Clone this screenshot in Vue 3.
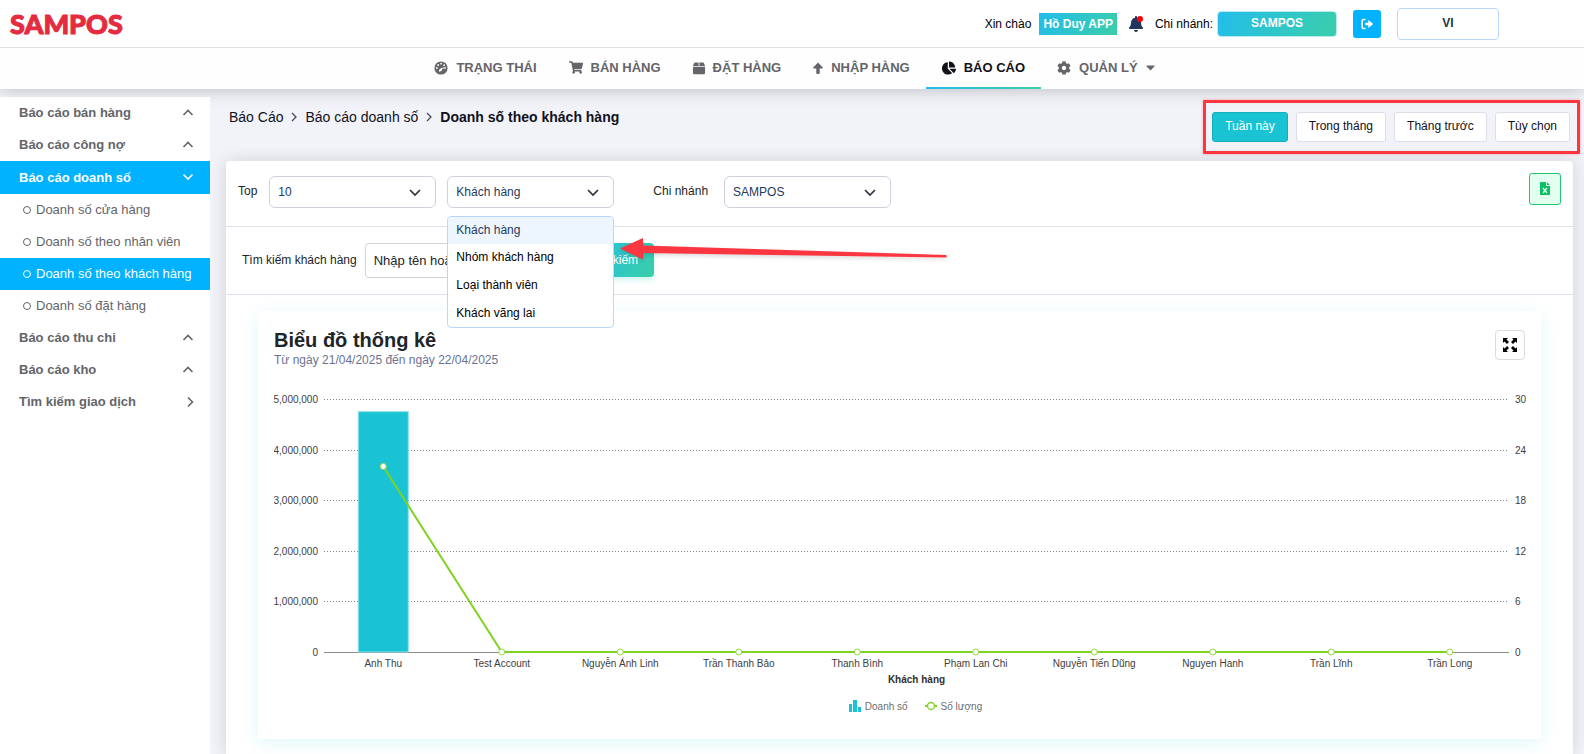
<script setup>
import { ref, computed, onMounted, onBeforeUnmount } from 'vue'

const navItems = [
  { label: 'TRẠNG THÁI', icon: 'palette' },
  { label: 'BÁN HÀNG', icon: 'cart' },
  { label: 'ĐẶT HÀNG', icon: 'box' },
  { label: 'NHẬP HÀNG', icon: 'arrow' },
  { label: 'BÁO CÁO', icon: 'pie', active: true },
  { label: 'QUẢN LÝ', icon: 'cog', caret: true },
]

const sideItems = [
  { label: 'Báo cáo bán hàng', dir: 'up' },
  { label: 'Báo cáo công nợ', dir: 'up' },
  {
    label: 'Báo cáo doanh số',
    dir: 'down',
    active: true,
    children: [
      { label: 'Doanh số cửa hàng' },
      { label: 'Doanh số theo nhân viên' },
      { label: 'Doanh số theo khách hàng', active: true },
      { label: 'Doanh số đặt hàng' },
    ],
  },
  { label: 'Báo cáo thu chi', dir: 'up' },
  { label: 'Báo cáo kho', dir: 'up' },
  { label: 'Tìm kiếm giao dịch', dir: 'right' },
]

const chevrons = {
  up: 'M1.500 8 L6 3.500 L10.500 8',
  down: 'M1.500 3.500 L6 8 L10.500 3.500',
  right: 'M6 1.500 L10.500 6 L6 10.500',
}

const ranges = ['Tuần này', 'Trong tháng', 'Tháng trước', 'Tùy chọn']
const activeRange = ref('Tuần này')

const groups = ['Khách hàng', 'Nhóm khách hàng', 'Loại thành viên', 'Khách vãng lai']
const group = ref('Khách hàng')
const top = ref('10')
const branch = ref('SAMPOS')
const keyword = ref('')

const points = [
  { name: 'Anh Thu', sales: 4750000, qty: 22 },
  { name: 'Test Account', sales: 0, qty: 0 },
  { name: 'Nguyễn Ánh Linh', sales: 0, qty: 0 },
  { name: 'Trần Thanh Bảo', sales: 0, qty: 0 },
  { name: 'Thanh Bình', sales: 0, qty: 0 },
  { name: 'Phạm Lan Chi', sales: 0, qty: 0 },
  { name: 'Nguyễn Tiến Dũng', sales: 0, qty: 0 },
  { name: 'Nguyen Hanh', sales: 0, qty: 0 },
  { name: 'Trần Lĩnh', sales: 0, qty: 0 },
  { name: 'Trần Long', sales: 0, qty: 0 },
]

const chartBox = ref(null)
const chartWidth = ref(1255)
const plot = { left: 50, right: 20, top: 20, height: 253 }
const baseY = plot.top + plot.height
const plotRight = computed(() => chartWidth.value - plot.right)
const step = computed(() => (plotRight.value - plot.left) / points.length)
const ticks = [5, 4, 3, 2, 1, 0].map((n) => ({
  y: Math.round(baseY - (n / 5) * plot.height),
  left: (n * 1000000).toLocaleString('en-US'),
  right: String(n * 6),
  zero: n === 0,
}))
const series = computed(() =>
  points.map((p, i) => ({
    ...p,
    x: plot.left + step.value * (i + 0.5),
    barY: baseY - (p.sales / 5000000) * plot.height,
    lineY: baseY - (p.qty / 30) * plot.height,
  }))
)
const linePath = computed(() => series.value.map((p) => `${p.x},${p.lineY}`).join(' '))

let observer
onMounted(() => {
  const measure = () => { chartWidth.value = chartBox.value.clientWidth }
  measure()
  observer = new ResizeObserver(measure)
  observer.observe(chartBox.value)
})
onBeforeUnmount(() => observer.disconnect())
</script>

<template>
  <div class="page">
    <header class="topbar">
      <a href="#" class="logo">SAMPOS</a>
      <div class="account">
        <span>Xin chào</span>
        <span class="user">Hồ Duy APP</span>
        <button class="bell" type="button" aria-label="Thông báo">
          <svg viewBox="0 0 448 512" width="14" height="16"><path fill="#20365c" d="M224 512c35.32 0 63.97-28.65 63.97-64H160.03c0 35.35 28.65 64 63.97 64zm215.39-149.71c-19.32-20.76-55.47-51.99-55.47-154.29 0-77.7-54.48-139.9-127.94-155.16V32c0-17.67-14.32-32-31.98-32s-31.98 14.33-31.98 32v20.84C118.56 68.1 64.08 130.3 64.08 208c0 102.3-36.15 133.53-55.47 154.29-6 6.45-8.66 14.16-8.61 21.71.11 16.4 12.98 32 32.1 32h383.8c19.12 0 32-15.6 32.1-32 .05-7.55-2.61-15.27-8.61-21.71z" /></svg>
          <i class="dot"></i>
        </button>
        <span class="branch-label">Chi nhánh:</span>
        <button class="branch" type="button">SAMPOS</button>
        <button class="logout" type="button" aria-label="Đăng xuất">
          <svg viewBox="0 0 12 12" width="12" height="12"><path d="M4.500 1.500H2.500a1.300 1.300 0 0 0-1.300 1.300v6.400a1.300 1.300 0 0 0 1.300 1.300h2" fill="none" stroke="#fff" stroke-width="1.600" /><path d="M4.300 4.800h3V2.500q0-.6.5-.2L11.700 5.600q.4.4 0 .8L7.800 9.700q-.5.4-.5-.2V7.200h-3z" fill="#fff" /></svg>
        </button>
        <button class="lang" type="button">VI</button>
      </div>
    </header>

    <nav class="nav">
      <a v-for="item in navItems" :key="item.label" href="#" :class="['nav-item', { active: item.active }]">
        <svg v-if="item.icon === 'palette'" viewBox="0 0 14 14" width="14" height="14">
          <circle cx="7" cy="7" r="6.600" fill="currentColor" />
          <g fill="#fff">
            <circle cx="2.800" cy="7" r="0.900" /><circle cx="4.200" cy="4" r="0.900" /><circle cx="7.200" cy="2.700" r="0.900" /><circle cx="10.200" cy="4.200" r="0.900" />
            <path d="M12.400 6.200L11.500 7.800Q8.600 7 7.900 8.100Q8.700 10 6 10.600Q4.600 10.800 4.900 9.400Q5.500 7.600 7.200 7.200Q8.500 6.400 12.400 6.200z" />
          </g>
        </svg>
        <svg v-else-if="item.icon === 'cart'" viewBox="0 0 576 512" width="14" height="13"><path fill="currentColor" d="M528.120 301.319l47.273-208C578.806 78.301 567.391 64 551.990 64H159.208l-9.166-44.810C147.758 8.021 137.930 0 126.529 0H24C10.745 0 0 10.745 0 24v16c0 13.255 10.745 24 24 24h69.883l70.248 343.435C147.325 417.100 136 435.222 136 456c0 30.928 25.072 56 56 56s56-25.072 56-56c0-15.674-6.447-29.835-16.824-40h209.647C430.447 426.165 424 440.326 424 456c0 30.928 25.072 56 56 56s56-25.072 56-56c0-22.172-12.888-41.332-31.579-50.405l5.517-24.276c3.413-15.018-8.002-29.319-23.403-29.319H218.117l-6.545-32h293.145c11.206 0 20.920-7.754 23.403-18.681z" /></svg>
        <svg v-else-if="item.icon === 'box'" viewBox="0 0 12 14" width="12" height="14"><path fill="currentColor" d="M2 1.500h3.600V5H0l1-2.700Q1.300 1.500 2 1.500zM6.400 1.500H10q.7 0 1 .8L12 5H6.400zM0 5.800h12V12q0 1.200-1.200 1.200H1.200Q0 13.200 0 12z" /></svg>
        <svg v-else-if="item.icon === 'arrow'" viewBox="0 0 10 14" width="10" height="14"><path fill="currentColor" d="M5 1.500L9.800 6.600q.4.900-.6.900H6.700V12q0 .9-.9.900H4.200q-.9 0-.9-.9V7.500H.8q-1 0-.6-.9z" /></svg>
        <svg v-else-if="item.icon === 'pie'" viewBox="0 0 544 512" width="14" height="14"><path fill="currentColor" d="M527.790 288H290.500l158.030 158.030c6.040 6.040 15.980 6.530 22.190.68 38.700-36.460 65.320-85.610 73.130-140.860 1.340-9.460-6.510-17.850-16.060-17.850zm-15.830-64.800C503.720 103.740 408.260 8.280 288.800.04 279.680-.59 272 7.100 272 16.240V240h223.770c9.140 0 16.820-7.680 16.190-16.800zM224 288V50.710c0-9.550-8.390-17.400-17.840-16.060C86.990 51.490-4.100 155.600.14 280.370 4.500 408.510 114.830 513.590 243.030 511.980c50.400-.63 96.970-16.870 135.260-44.030 7.900-5.600 8.420-17.230 1.570-24.080L224 288z" /></svg>
        <svg v-else viewBox="0 0 512 512" width="14" height="14"><path fill="currentColor" d="M487.400 315.700l-42.600-24.600c4.300-23.200 4.300-47 0-70.200l42.600-24.600c4.900-2.800 7.100-8.600 5.500-14-11.100-35.600-30-67.800-54.700-94.600-3.800-4.100-10-5.100-14.800-2.300L380.800 110c-17.900-15.400-38.500-27.300-60.800-35.100V25.800c0-5.600-3.900-10.500-9.400-11.700-36.700-8.200-74.300-7.800-109.200 0-5.500 1.200-9.400 6.100-9.400 11.700V75c-22.200 7.900-42.800 19.800-60.800 35.100L88.700 85.500c-4.900-2.800-11-1.900-14.800 2.300-24.700 26.700-43.600 58.900-54.700 94.600-1.700 5.400.6 11.200 5.500 14L67.300 221c-4.300 23.200-4.300 47 0 70.200l-42.600 24.600c-4.900 2.800-7.100 8.600-5.500 14 11.100 35.600 30 67.800 54.700 94.600 3.800 4.100 10 5.100 14.800 2.300l42.600-24.600c17.900 15.400 38.500 27.300 60.800 35.100v49.200c0 5.600 3.900 10.500 9.400 11.700 36.700 8.200 74.300 7.800 109.200 0 5.500-1.200 9.400-6.100 9.400-11.700v-49.200c22.200-7.900 42.800-19.800 60.800-35.100l42.600 24.600c4.900 2.800 11 1.900 14.800-2.300 24.700-26.700 43.600-58.900 54.700-94.600 1.500-5.500-.7-11.300-5.600-14.100zM256 336c-44.100 0-80-35.900-80-80s35.900-80 80-80 80 35.900 80 80-35.900 80-80 80z" /></svg>
        <span>{{ item.label }}</span>
        <svg v-if="item.caret" viewBox="0 0 9 6" width="9" height="6"><path fill="currentColor" d="M1 .5h7q.8.2.3.900L5 5q-.5.500-1 0L.7 1.400Q.2.700 1 .5z" /></svg>
      </a>
    </nav>

    <div class="body">
      <aside class="sidebar">
        <template v-for="item in sideItems" :key="item.label">
          <a href="#" :class="['side-item', { active: item.active }]">
            <span>{{ item.label }}</span>
            <svg viewBox="0 0 12 12" width="12" height="12"><path :d="chevrons[item.dir]" fill="none" stroke="currentColor" stroke-width="1.600" /></svg>
          </a>
          <a v-for="child in item.children" :key="child.label" href="#" :class="['side-child', { active: child.active }]">
            <i class="ring"></i><span>{{ child.label }}</span>
          </a>
        </template>
      </aside>

      <main class="main">
        <div class="head">
          <div class="crumbs">
            <a href="#">Báo Cáo</a>
            <svg viewBox="0 0 6 10" width="6" height="10"><path d="M1 1l4 4-4 4" fill="none" stroke="#444b5c" stroke-width="1.300" /></svg>
            <a href="#">Báo cáo doanh số</a>
            <svg viewBox="0 0 6 10" width="6" height="10"><path d="M1 1l4 4-4 4" fill="none" stroke="#444b5c" stroke-width="1.300" /></svg>
            <strong>Doanh số theo khách hàng</strong>
          </div>
          <div class="ranges">
            <button v-for="r in ranges" :key="r" type="button" :class="{ active: r === activeRange }" @click="activeRange = r">{{ r }}</button>
            <i class="highlight"></i>
          </div>
        </div>

        <section class="card">
          <div class="filters">
            <label for="top">Top</label>
            <div class="select">
              <select id="top" v-model="top"><option>10</option></select>
              <svg viewBox="0 0 12 8" width="12" height="8"><path d="M1 1l5 5 5-5" fill="none" stroke="#2d3440" stroke-width="1.700" /></svg>
            </div>
            <div class="select">
              <select v-model="group" aria-label="Nhóm theo"><option v-for="g in groups" :key="g">{{ g }}</option></select>
              <svg viewBox="0 0 12 8" width="12" height="8"><path d="M1 1l5 5 5-5" fill="none" stroke="#2d3440" stroke-width="1.700" /></svg>
              <ul class="menu">
                <li v-for="g in groups" :key="g" :class="{ active: g === group }" @click="group = g">{{ g }}</li>
              </ul>
            </div>
            <label for="branch" class="branch-filter">Chi nhánh</label>
            <div class="select">
              <select id="branch" v-model="branch"><option>SAMPOS</option></select>
              <svg viewBox="0 0 12 8" width="12" height="8"><path d="M1 1l5 5 5-5" fill="none" stroke="#2d3440" stroke-width="1.700" /></svg>
            </div>
            <button class="excel" type="button" aria-label="Xuất Excel">
              <svg viewBox="0 0 10 13" width="10" height="13"><path fill="#0bbf63" d="M.7 0H6v3.200q0 .8.8.8H10v8.300q0 .7-.7.700H.7Q0 13 0 12.300V.7Q0 0 .7 0zM7 0l3 3H7z" /><path d="M3 6l4 5M7 6l-4 5" stroke="#e3fff0" stroke-width="1.300" /></svg>
            </button>
          </div>

          <form class="search" @submit.prevent>
            <label for="keyword">Tìm kiếm khách hàng</label>
            <input id="keyword" v-model="keyword" type="text" placeholder="Nhập tên hoặc số điện thoại" />
            <button type="submit">Tìm kiếm</button>
            <svg class="pointer" viewBox="0 0 328 24" width="328" height="24"><path fill="#fb3640" d="M0 11.500L23 1v7.500L326 18q1.500 1 0 2.500L23 16v6.500z" /></svg>
          </form>

          <div class="chart-card">
            <div class="chart-head">
              <div>
                <h2>Biểu đồ thống kê</h2>
                <p>Từ ngày 21/04/2025 đến ngày 22/04/2025</p>
              </div>
              <button class="expand" type="button" aria-label="Phóng to">
                <svg viewBox="0 0 14 14" width="14" height="14"><path fill="#000" d="M0 0h5L3.500 1.500 6 4 4 6 1.500 3.500 0 5zM14 0v5l-1.500-1.500L10 6 8 4l2.500-2.500L9 0zM0 14V9l1.500 1.500L4 8l2 2-2.500 2.500L5 14zM14 14H9l1.500-1.500L8 10l2-2 2.500 2.500L14 9z" /></svg>
              </button>
            </div>
            <div ref="chartBox" class="chart">
              <svg :width="chartWidth" height="312">
                <g v-for="t in ticks" :key="t.y">
                  <line :x1="plot.left" :x2="plotRight" :y1="t.y + 0.5" :y2="t.y + 0.5" :class="t.zero ? 'axis' : 'grid'" />
                  <text class="tick" :x="plot.left - 6" :y="t.y + 4" text-anchor="end">{{ t.left }}</text>
                  <text class="tick" :x="plotRight + 6" :y="t.y + 4">{{ t.right }}</text>
                </g>
                <template v-for="p in series" :key="p.name">
                  <rect v-if="p.sales" class="bar" :x="p.x - 25" :y="p.barY" width="50" :height="baseY - p.barY" />
                </template>
                <polyline class="line" :points="linePath" />
                <g v-for="p in series" :key="p.name">
                  <circle class="marker" :cx="p.x" :cy="p.lineY" r="3" />
                  <text class="tick" :x="p.x" :y="baseY + 15" text-anchor="middle">{{ p.name }}</text>
                </g>
                <text class="axis-title" :x="(plot.left + plotRight) / 2" :y="baseY + 31" text-anchor="middle">Khách hàng</text>
              </svg>
            </div>
            <div class="legend">
              <span>
                <svg viewBox="0 0 12 12" width="12" height="12"><path fill="#19c3d4" d="M0 4h3v8H0zM4 0h4v12H4zM9 7h3v5H9z" /></svg>
                Doanh số
              </span>
              <span>
                <svg viewBox="0 0 12 10" width="12" height="10"><path d="M0 5h12" stroke="#7ed321" stroke-width="2" /><circle cx="6" cy="5" r="3.500" fill="#fff" stroke="#7ed321" stroke-width="1.300" /></svg>
                Số lượng
              </span>
            </div>
          </div>
        </section>
      </main>
    </div>
  </div>
</template>

<style>
body { background: #f2f3f8; }
</style>

<style scoped>
* { box-sizing: border-box; }
.page {
  min-height: 100vh;
  display: flex;
  flex-direction: column;
  font-family: "Liberation Sans", Arial, sans-serif;
  font-size: 12px;
  color: #212529;
}
a { color: inherit; text-decoration: none; }
button, input, select { font: inherit; margin: 0; }
button { cursor: pointer; padding: 0; border: 0; }
svg { display: block; flex: none; }

.topbar {
  position: relative;
  z-index: 1;
  height: 48px;
  padding: 0 85px 0 10px;
  display: flex;
  align-items: center;
  justify-content: space-between;
  background: #fff;
  border-bottom: 1px solid #e2e2e4;
}
.logo {
  font: 900 27px "Lato", sans-serif;
  color: #e52b3f;
  -webkit-text-stroke: 1px #e52b3f;
}
.account { display: flex; align-items: center; color: #000; }
.user {
  margin-left: 8px;
  padding: 0 4px;
  line-height: 22px;
  font-weight: bold;
  color: #fff;
  background: linear-gradient(120deg, #23bdec, #3acea8);
}
.bell { position: relative; margin-left: 12px; background: none; }
.dot { position: absolute; top: 0; right: 0; width: 6px; height: 6px; border-radius: 50%; background: #f00; }
.branch-label { margin-left: 12px; }
.branch {
  margin-left: 4px;
  width: 120px;
  height: 26px;
  padding-bottom: 2px;
  border: 1px solid #b5eaf0;
  border-radius: 4px;
  font-weight: bold;
  color: #fff;
  background: linear-gradient(120deg, #23bdec, #3acea8) border-box;
}
.logout {
  display: grid;
  place-items: center;
  width: 28px;
  height: 28px;
  margin: 0 16px;
  border-radius: 3px;
  background: #00b2ff;
}
.lang {
  width: 102px;
  height: 32px;
  padding-bottom: 2px;
  border: 1px solid #b9d6fb;
  border-radius: 4px;
  background: #fff;
  font-weight: bold;
  color: #1f3540;
}

.nav {
  position: relative;
  display: flex;
  justify-content: center;
  height: 41px;
  padding-left: 5px;
  background: #fefefe;
  box-shadow: 0 2px 16px rgba(40, 42, 60, 0.24);
}
.nav-item {
  position: relative;
  display: flex;
  align-items: center;
  gap: 8px;
  padding: 0 16px;
  padding-bottom: 2px;
  font-size: 13px;
  font-weight: bold;
  color: #646469;
}
.nav-item.active { color: #11111c; }
.nav-item.active::after {
  content: "";
  position: absolute;
  left: 0;
  right: 0;
  bottom: 0;
  height: 2px;
  background: linear-gradient(90deg, #23bdec, #3acea8);
}

.body { flex: 1; display: flex; }
.sidebar {
  position: relative;
  flex: none;
  width: 210px;
  margin-top: 8px;
  background: #fff;
  font-size: 13px;
  color: #646469;
}
.side-item, .side-child { display: flex; align-items: center; height: 32px; padding-bottom: 1px; }
.side-item { justify-content: space-between; padding-left: 19px; padding-right: 16px; font-weight: bold; }
.side-item.active { height: 33px; }
.side-child { gap: 5px; padding-left: 23px; }
.side-item.active, .side-child.active { background: #00b2ff; color: #fff; }
.ring { width: 8px; height: 8px; border: 1px solid currentColor; border-radius: 50%; }

.main { flex: 1; min-width: 0; display: flex; flex-direction: column; padding: 0 11px 0 16px; }
.head { display: flex; justify-content: space-between; padding: 23px 3px 19px; }
.crumbs { display: flex; align-items: center; gap: 8px; height: 10px; font-size: 14px; color: #11111c; }
.ranges { position: relative; display: flex; gap: 8px; }
.ranges button {
  height: 30px;
  padding: 0 12px 2px;
  border: 1px solid #dcdfea;
  border-radius: 3px;
  background: #fff;
  color: #11111c;
}
.ranges button.active { background: #19c3d4; border-color: #14aebd; color: #fff; }
.highlight {
  position: absolute;
  inset: -12px -10px -12px -9px;
  border: 3px solid #fb3640;
  border-radius: 1px;
  box-shadow: 0 0 3px rgba(251, 54, 64, 0.4);
  pointer-events: none;
}

.card {
  flex: 1;
  background: #fff;
  border-radius: 4px 4px 0 0;
  box-shadow: 0 0 16px rgba(60, 62, 85, 0.18);
}
.filters { display: flex; align-items: center; height: 66px; padding: 0 12px 3px; border-bottom: 1px solid #dbe0ea; }
.filters label { padding-bottom: 3px; }
.select { position: relative; width: 167px; margin-left: 12px; }
.select + .select { margin-left: 11px; }
.select select {
  display: block;
  width: 100%;
  height: 32px;
  padding: 0 30px 0 8px;
  border: 1px solid #cdd2de;
  border-radius: 6px;
  appearance: none;
  background: #fff;
  color: #223a5e;
}
.select > svg { position: absolute; right: 15px; top: 13px; pointer-events: none; }
.branch-filter { margin-left: 39px; margin-right: 4px; }
.menu {
  position: absolute;
  z-index: 2;
  top: 40px;
  left: 0;
  right: 0;
  margin: 0;
  padding: 0;
  list-style: none;
  border: 1px solid #b9d6fb;
  border-radius: 4px;
  overflow: hidden;
  background: #fff;
  color: #000;
}
.menu li { height: 28px; padding-left: 8px; line-height: 27px; }
.menu li:first-child, .menu li:last-child { height: 27px; }
.menu li.active { background: #edf5ff; color: #223a5e; }
.excel {
  display: grid;
  place-items: center;
  width: 32px;
  height: 32px;
  margin: 0 0 7px auto;
  border: 1px solid #1cc672;
  border-radius: 3px;
  background: #e3fff0;
}

.search { position: relative; display: flex; align-items: center; height: 68px; padding: 0 16px 1px; border-bottom: 1px solid #dbe0ea; }
.search input {
  width: 202px;
  height: 35px;
  margin-left: 8px;
  padding: 0 8px;
  border: 1px solid #ced4da;
  border-radius: 4px;
  font-size: 13px;
  color: #212529;
}
.search input::placeholder { color: #212529; opacity: 1; }
.search button {
  height: 34px;
  margin-left: 6px;
  padding: 0 16px;
  border-radius: 4px;
  color: #fff;
  background: linear-gradient(120deg, #23bdec, #3acea8);
  box-shadow: 0 3px 5px rgba(58, 206, 200, 0.25);
}
.pointer { position: absolute; z-index: 3; left: 394px; top: 10px; filter: drop-shadow(0 2px 2px rgba(0, 0, 0, 0.15)); pointer-events: none; }

.chart-card {
  margin: 16px 32px;
  padding: 16px 12px 22px 16px;
  background: #fff;
  box-shadow: 0 4px 16px rgba(30, 200, 220, 0.14);
}
.chart-head { display: flex; justify-content: space-between; align-items: flex-start; height: 52px; padding-right: 4px; }
.chart-head h2 { margin: 0; font-size: 20px; line-height: 26px; }
.chart-head p { margin: 0; line-height: 14px; color: #6b7390; }
.expand {
  display: grid;
  place-items: center;
  width: 30px;
  height: 30px;
  margin-top: 3px;
  border: 1px solid #dcdcdf;
  border-radius: 4px;
  background: #fff;
}
.chart { height: 316px; overflow: hidden; }
.grid { stroke: #808080; stroke-dasharray: 1 2; }
.axis { stroke: #8c8c8c; }
.tick { font-size: 10px; fill: #404040; }
.axis-title { font-size: 10px; font-weight: bold; fill: #303030; }
.bar { fill: #19c3d4; stroke: #8ce1ea; }
.line { fill: none; stroke: #7ed321; stroke-width: 2; }
.marker { fill: #fff; stroke: #8fdc40; stroke-width: 1; }
.legend { display: flex; justify-content: center; gap: 17px; height: 22px; padding-left: 28px; align-items: center; font-size: 10px; color: #6e6e6e; }
.legend span { display: flex; align-items: center; gap: 4px; }
</style>
